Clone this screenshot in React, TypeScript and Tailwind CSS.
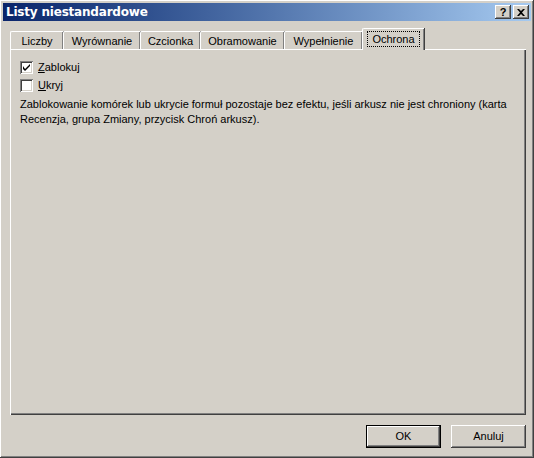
import React from 'react';

const raised =
  'shadow-[inset_-1px_-1px_#404040,inset_1px_1px_#ffffff,inset_-2px_-2px_#808080,inset_2px_2px_#d4d0c8]';

const tabs: { label: string; width: string }[] = [
  { label: 'Liczby', width: 'w-[53px]' },
  { label: 'Wyrównanie', width: 'w-[77px]' },
  { label: 'Czcionka', width: 'w-[60px]' },
  { label: 'Obramowanie', width: 'w-[84px]' },
  { label: 'Wypełnienie', width: 'w-[78px]' },
  { label: 'Ochrona', width: 'w-[62px]' },
];

const Check: React.FC<{ checked?: boolean }> = ({ checked }) => (
  <span className="w-[13px] h-[13px] bg-white shadow-[inset_1px_1px_#808080,inset_-1px_-1px_#ffffff,inset_2px_2px_#404040,inset_-2px_-2px_#d4d0c8] flex items-center justify-center">
    {checked && (
      <svg width="7" height="7" viewBox="0 0 7 7">
        <path d="M0 2v3l2 2l5-5v-2l-5 5z" fill="#000" />
      </svg>
    )}
  </span>
);

const TitleButton: React.FC<{ children: React.ReactNode }> = ({ children }) => (
  <div
    className={`w-[16px] h-[14px] bg-[#d4d0c8] ${raised} flex items-center justify-center text-[11px] font-bold leading-none text-black`}
  >
    {children}
  </div>
);

const App: React.FC = () => {
  return (
    <div
      className={`w-[534px] h-[458px] bg-[#d4d0c8] p-[3px] flex flex-col ${raised} text-[11px] text-black font-['Liberation_Sans',sans-serif]`}
    >
      <div className="h-[18px] bg-gradient-to-r from-[#0a246a] to-[#a6caf0] flex items-center justify-between pl-[3px] pr-[2px]">
        <span className="text-white font-bold text-[12px] font-['DejaVu_Sans',sans-serif] tracking-[-0.2px]">
          Listy niestandardowe
        </span>
        <div className="flex">
          <TitleButton>?</TitleButton>
          <div className="ml-[2px]">
            <TitleButton>
              <svg width="8" height="7" viewBox="0 0 8 7">
                <path d="M0 0h2l2 2l2-2h2v0l-3 3.5l3 3.5h-2l-2-2l-2 2h-2l3-3.5z" fill="#000" />
              </svg>
            </TitleButton>
          </div>
        </div>
      </div>

      <div className="flex-1 flex flex-col pl-[7px] pr-[5px] pt-[7px]">
        <div className="flex items-end h-[21px]">
          {tabs.map((t) => {
            const active = t.label === 'Ochrona';
            return (
              <div
                key={t.label}
                className={
                  active
                    ? `relative z-10 ${t.width} h-[22px] -mb-px pt-[3px] bg-[#d4d0c8] border-l border-t border-white rounded-tl-[2px] shadow-[1px_0_#404040,inset_-1px_0_#808080] flex justify-center items-start`
                    : `${t.width} h-[18px] pt-[2px] border-l border-t border-white rounded-tl-[2px] shadow-[1px_0_#404040,inset_-1px_0_#808080] flex justify-center items-start`
                }
              >
                {active ? (
                  <span className="outline outline-1 outline-dotted outline-black px-[4px] leading-[14px]">
                    {t.label}
                  </span>
                ) : (
                  <span className="leading-[14px]">{t.label}</span>
                )}
              </div>
            );
          })}
        </div>

        <div className="h-[366px] border-l border-t border-white shadow-[inset_-1px_-1px_#404040,inset_-2px_-2px_#808080] pl-[9px] pr-[6px] pt-[9px]">
          <label className="flex items-center h-[17px]">
            <Check checked />
            <span className="ml-[5px]">
              <span className="underline">Z</span>ablokuj
            </span>
          </label>
          <label className="flex items-center h-[17px] mt-px">
            <Check />
            <span className="ml-[5px]">
              <span className="underline">U</span>kryj
            </span>
          </label>
          <p className="mt-[3px] leading-[15px]">
            Zablokowanie komórek lub ukrycie formuł pozostaje bez efektu, jeśli arkusz nie jest chroniony (karta
            Recenzja, grupa Zmiany, przycisk Chroń arkusz).
          </p>
        </div>

        <div className="flex justify-end gap-[10px] mt-[10px]">
          <button className="w-[75px] h-[23px] bg-[#d4d0c8] border border-black shadow-[inset_-1px_-1px_#404040,inset_1px_1px_#ffffff,inset_-2px_-2px_#808080] flex items-center justify-center">
            OK
          </button>
          <button className={`w-[75px] h-[23px] bg-[#d4d0c8] ${raised} flex items-center justify-center`}>
            Anuluj
          </button>
        </div>
      </div>
    </div>
  );
};

export default App;
